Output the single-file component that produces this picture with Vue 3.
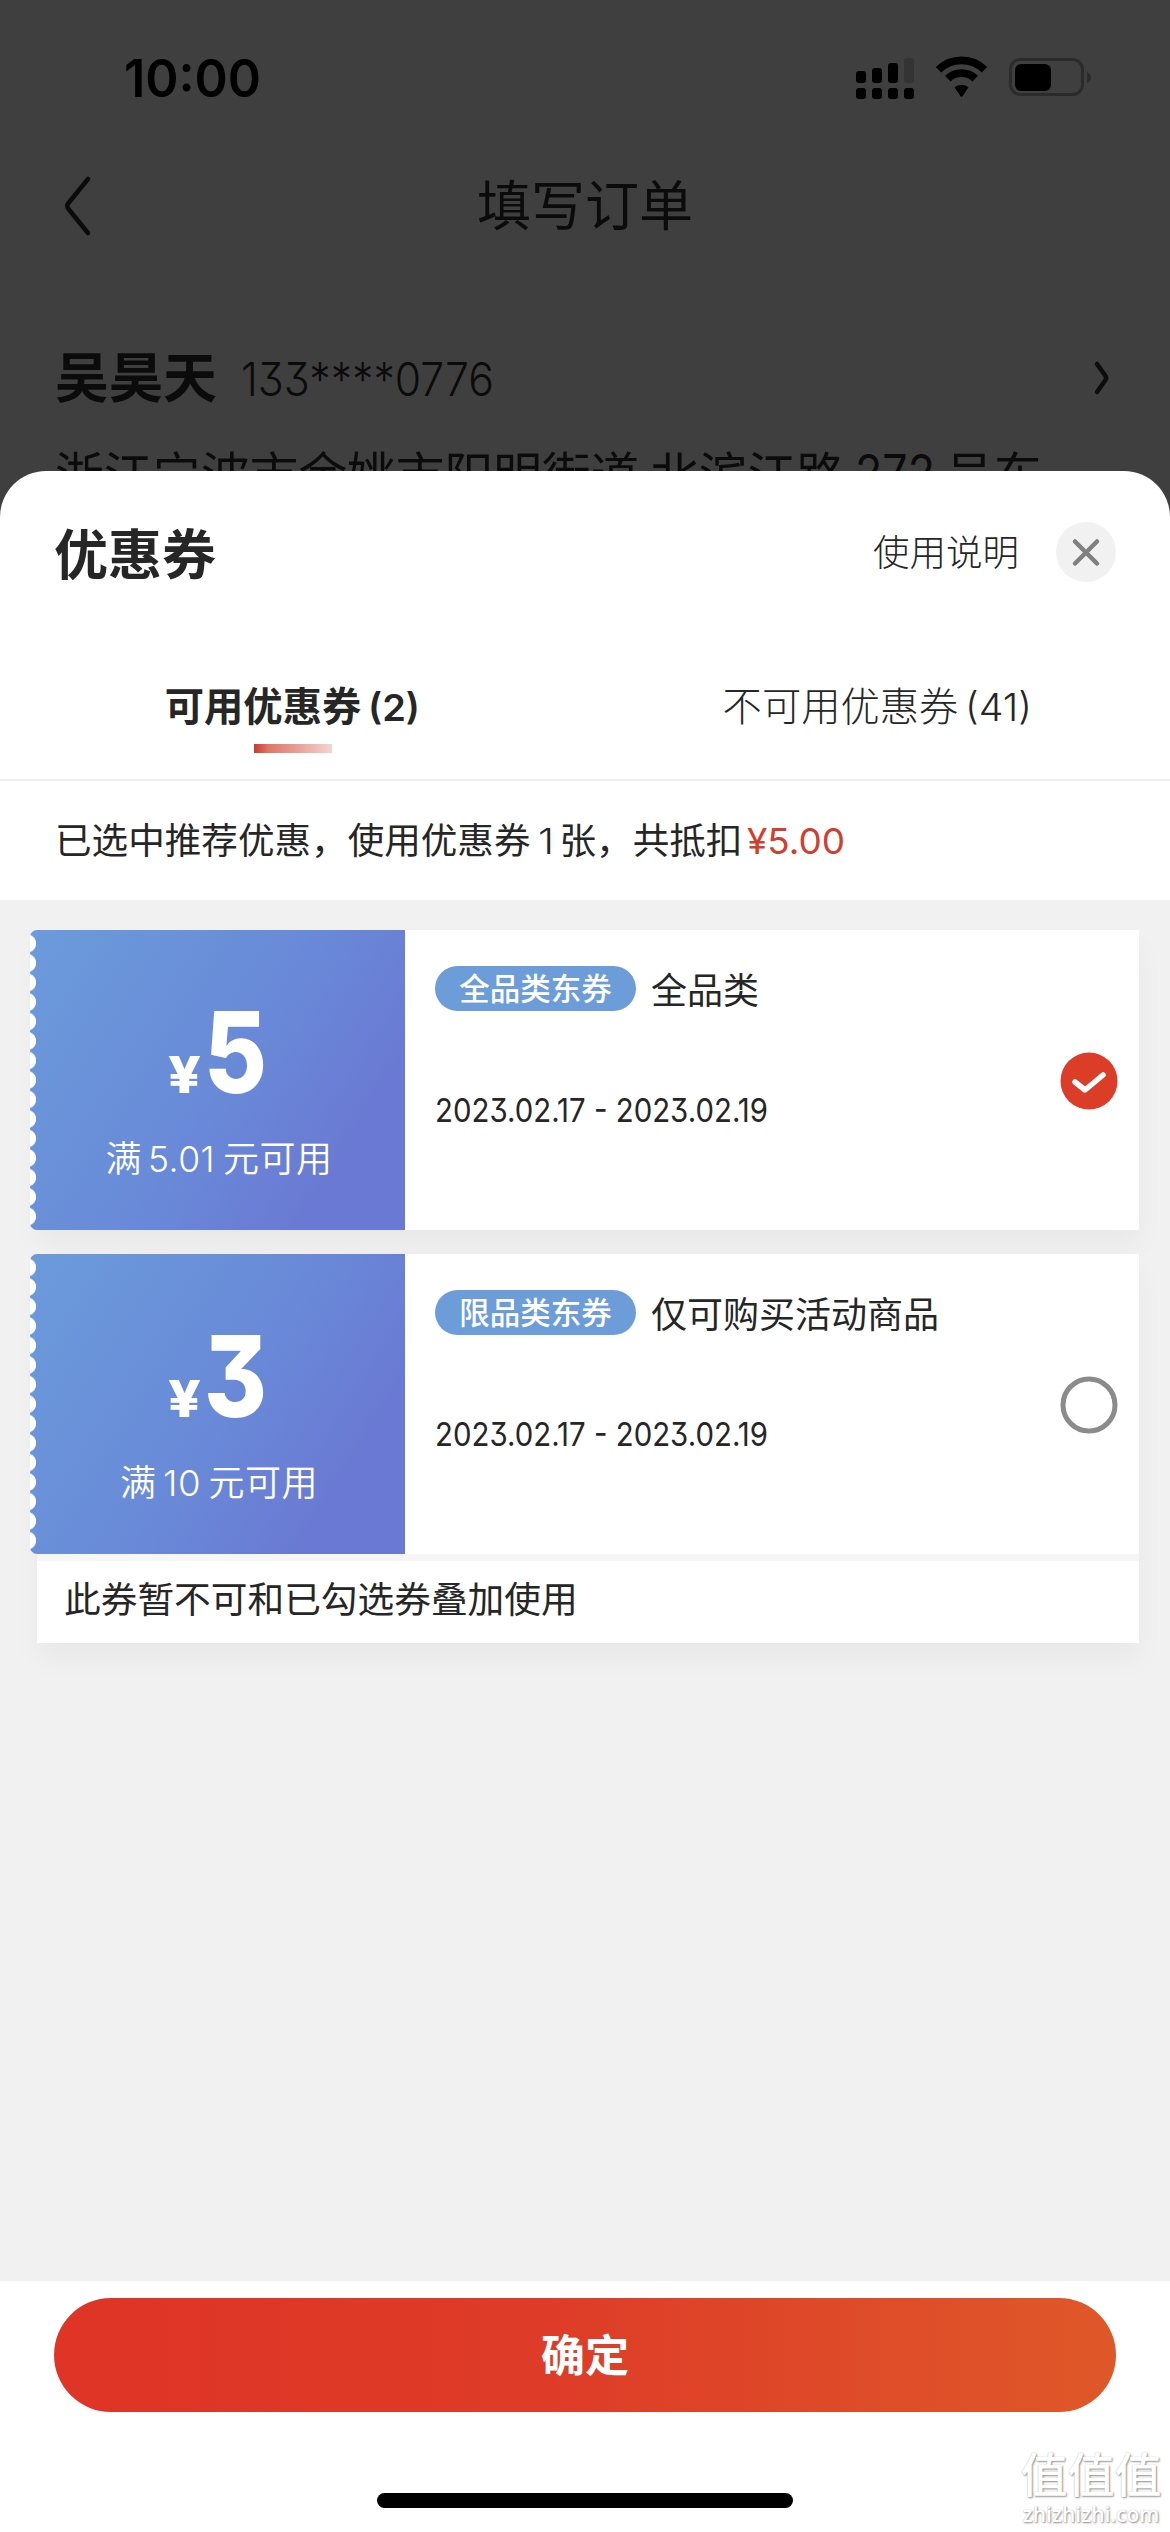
<script setup>
import { h } from 'vue'

// Latin digits set to a fixed width, sitting on the surrounding text baseline
const Num = ({ text, size, width, weight = 400 }) =>
  h('svg', { class: 'num', width, height: size * 0.727 }, [
    h('text', {
      x: 0,
      y: size * 0.727,
      textLength: width,
      lengthAdjust: 'spacingAndGlyphs',
      'font-size': size,
      'font-weight': weight,
      fill: 'currentColor',
      style: 'white-space: pre',
    }, text),
  ])
Num.props = ['text', 'size', 'width', 'weight']

const coupons = [
  { id: 1, amount: '5', limit: '5.01', limitWidth: 67, tag: '全品类东券', name: '全品类', selected: true },
  { id: 2, amount: '3', limit: '10', limitWidth: 38, tag: '限品类东券', name: '仅可购买活动商品', selected: false, note: '此券暂不可和已勾选券叠加使用' },
]
</script>

<template>
  <div class="screen">
    <header class="backdrop">
      <div class="status">
        <Num text="10:00" :size="52" :width="137" :weight="600" />
        <svg class="status-icons" width="240" height="44" viewBox="0 0 240 44">
          <g>
            <rect x="0" y="15" width="10" height="12" rx="3" />
            <rect x="16" y="12" width="10" height="15" rx="3" />
            <rect x="32" y="7" width="10" height="20" rx="3" />
            <rect x="48" y="2" width="10" height="25" rx="3" fill="#343434" />
            <rect x="0" y="32" width="10" height="11" rx="3" />
            <rect x="16" y="32" width="10" height="11" rx="3" />
            <rect x="32" y="32" width="10" height="11" rx="3" />
            <rect x="48" y="32" width="10" height="11" rx="3" />
          </g>
          <g fill="none" stroke="#000" stroke-width="7.8">
            <path d="M82.500 13.800 A33 33 0 0 1 128.500 13.800" />
            <path d="M91.800 22.600 A20 20 0 0 1 119.200 22.600" />
          </g>
          <path d="M98.500 31.300 A10.500 10.500 0 0 1 112.500 31.300 L106.500 40.300 Q105.500 41.300 104.500 40.300 Z" />
          <rect x="154.500" y="3.500" width="72" height="35" rx="10" fill="none" stroke="#2b2b2b" stroke-width="3" />
          <rect x="159" y="8" width="36" height="27" rx="6" />
          <path d="M231 16 Q235 17.500 235 21.500 Q235 25.500 231 27 Z" fill="#2b2b2b" />
        </svg>
      </div>
      <nav class="nav">
        <svg class="back" width="32" height="62" viewBox="0 0 32 62">
          <path d="M26 4 L6.500 28 Q4 31 6.500 34 L26 58" fill="none" stroke="#0b0b0b" stroke-width="4.500" stroke-linecap="round" />
        </svg>
        <h1>填写订单</h1>
      </nav>
      <section class="address">
        <div class="person">
          <strong>吴昊天</strong>
          <Num text="133****0776" :size="47" :width="253" :weight="300" />
          <svg class="go" width="18" height="36" viewBox="0 0 18 36">
            <path d="M4 4 L12.500 16 Q13.800 18 12.500 20 L4 32" fill="none" stroke="#0d0d0d" stroke-width="4.500" stroke-linecap="round" />
          </svg>
        </div>
        <p>浙江宁波市余姚市阳明街道&nbsp;北滨江路<Num text="272" :size="50" :width="80" />号东</p>
      </section>
    </header>

    <main class="sheet">
      <div class="sheet-head">
        <h2>优惠券</h2>
        <span class="help">使用说明</span>
        <svg width="60" height="60" viewBox="0 0 60 60">
          <circle cx="30" cy="30" r="30" fill="#f1f1f1" />
          <path d="M19 19.500 L41 41.500 M41 19.500 L19 41.500" stroke="#808080" stroke-width="4.500" stroke-linecap="round" />
        </svg>
      </div>

      <div class="tabs">
        <div class="tab active">
          <span>可用优惠券<Num class="count" text="(2)" :size="37" :width="52" :weight="600" /></span>
        </div>
        <div class="tab">
          <span>不可用优惠券<Num class="count" text="(41)" :size="38" :width="67" :weight="300" /></span>
        </div>
      </div>

      <p class="summary">已选中推荐优惠，使用优惠券<Num class="one" text="1" :size="36" :width="16" :weight="350" />张，共抵扣<Num class="off" text="¥5.00" :size="36" :width="98" /></p>

      <div class="list">
        <article v-for="c in coupons" :key="c.id" class="coupon">
          <div class="ticket">
            <div class="face">
              <div class="amount">
                <Num text="¥" :size="51" :width="33" :weight="800" />
                <Num :text="c.amount" :size="113" :width="63" :weight="850" />
              </div>
              <div class="limit">满<Num class="limit-num" :text="c.limit" :size="36" :width="c.limitWidth" :weight="300" />元可用</div>
            </div>
            <div class="info">
              <div class="title"><span class="tag">{{ c.tag }}</span><span>{{ c.name }}</span></div>
              <Num class="date" text="2023.02.17 - 2023.02.19" :size="32.500" :width="333" />
            </div>
            <svg class="check" width="58" height="58" viewBox="0 0 58 58">
              <template v-if="c.selected">
                <circle cx="29" cy="29" r="28.500" fill="#dc3d29" />
                <path d="M15 30 L25 38 L43 23" fill="none" stroke="#fff" stroke-width="5.500" stroke-linecap="round" stroke-linejoin="round" />
              </template>
              <circle v-else cx="29" cy="29" r="26" fill="#fff" stroke="#8b8b8b" stroke-width="5" />
            </svg>
          </div>
          <p v-if="c.note" class="note">{{ c.note }}</p>
        </article>
      </div>

      <footer class="bottom">
        <button class="confirm">确定</button>
        <div class="home"></div>
      </footer>
    </main>

    <div class="mark">
      <b>值值值</b>
      <span>zhizhizhi.com</span>
    </div>
  </div>
</template>

<style>
body {
  background: #3f3f3f;
}
</style>

<style scoped>
.screen {
  position: relative;
  width: 1170px;
  height: 2532px;
  overflow: hidden;
  display: flex;
  flex-direction: column;
  background: #3f3f3f;
  color: #262626;
  font-family: "Noto Sans CJK SC", sans-serif;
}
h1, h2, p {
  margin: 0;
  font-weight: 400;
}
.num {
  overflow: visible;
  font-family: Inter, "Liberation Sans", sans-serif;
  font-feature-settings: "cv09" 1;
  flex: none;
}
.backdrop {
  height: 471px;
  flex: none;
  overflow: hidden;
  color: #0b0b0b;
}
.status {
  height: 156px;
  box-sizing: border-box;
  padding: 0 74px 0 124px;
  display: flex;
  align-items: center;
  justify-content: space-between;
  color: #000;
}
.nav {
  height: 100px;
  display: flex;
  align-items: center;
  padding: 0 62px;
}
.nav h1 {
  flex: 1;
  margin-right: 32px;
  text-align: center;
  font-size: 54px;
  line-height: 100px;
  padding-bottom: 6px;
}
.address {
  padding: 82px 57px 0 55px;
}
.person {
  display: flex;
  align-items: center;
  height: 80px;
}
.person strong {
  font-size: 54px;
  line-height: 80px;
  padding-bottom: 6px;
  margin-right: 24px;
}
.person .num {
  margin-top: 2px;
}
.go {
  margin-left: auto;
  margin-right: 2px;
}
.address p {
  margin-top: 24px;
  font-size: 48.700px;
  line-height: 60px;
  white-space: nowrap;
}
.address p .num {
  margin: 0 10px 2px;
}
.sheet {
  flex: 1;
  min-height: 0;
  display: flex;
  flex-direction: column;
  background: #fff;
  border-radius: 46px 46px 0 0;
}
.sheet-head {
  height: 162px;
  flex: none;
  display: flex;
  align-items: center;
  padding: 0 54px 0 54px;
}
.sheet-head h2 {
  flex: 1;
  font-size: 54px;
  font-weight: 700;
  line-height: 80px;
}
.help {
  font-size: 36.500px;
  font-weight: 300;
  line-height: 54px;
  margin-right: 37px;
  padding-bottom: 3px;
}
.tabs {
  height: 146px;
  flex: none;
  display: flex;
  border-bottom: 2px solid #eee;
}
.tab {
  flex: 1;
  display: flex;
  flex-direction: column;
  align-items: center;
  font-size: 39.300px;
  font-weight: 300;
  line-height: 58px;
  padding-top: 42px;
}
.tab.active {
  font-weight: 700;
}
.count {
  margin-left: 7px;
}
.tab.active::after {
  content: "";
  width: 78px;
  height: 9px;
  margin-top: 11px;
  background: linear-gradient(90deg, #cb392c, #df7466 18%, #f3d5d0);
}
.summary {
  height: 119px;
  flex: none;
  padding: 0 55px;
  font-size: 36.600px;
  line-height: 116px;
  white-space: nowrap;
}
.one {
  margin: 0 6px 0 7px;
}
.off {
  margin-left: 5px;
  color: #d13f2f;
}
.list {
  flex: 1;
  display: flex;
  flex-direction: column;
  gap: 24px;
  padding: 30px 31px 0 30px;
  background: #f1f1f1;
}
.ticket {
  position: relative;
  z-index: 1;
  height: 300px;
  display: flex;
}
.coupon {
  position: relative;
}
.coupon::before {
  content: "";
  position: absolute;
  inset: 0 0 0 8px;
  box-shadow: 0 16px 28px rgba(0, 0, 0, 0.04);
}
.face {
  width: 375px;
  flex: none;
  box-sizing: border-box;
  border-radius: 7px 0 0 7px;
  background:
    radial-gradient(circle at -3px 50%, #fff 8.700px, transparent 9.500px) 0 3.750px / 10px 19.500px repeat-y,
    linear-gradient(122deg, #6b9bdb, #698ad8 50%, #6a79d3 82%);
  color: #fff;
  display: flex;
  flex-direction: column;
  align-items: center;
  padding-top: 81px;
}
.amount {
  display: flex;
  align-items: flex-end;
  height: 82px;
  gap: 3px;
}
.limit {
  margin-top: 36px;
  padding-left: 3px;
  font-size: 36px;
  font-weight: 350;
  line-height: 54px;
  letter-spacing: 0.500px;
}
.limit-num {
  margin: 0 8px 0 6px;
}
.info {
  flex: 1;
  padding: 36px 0 0 30px;
  background: #fff;
}
.title {
  display: flex;
  align-items: center;
  gap: 15px;
  height: 45px;
  font-size: 36px;
  line-height: 43px;
  white-space: nowrap;
}
.tag {
  width: 201px;
  height: 45px;
  border-radius: 23px;
  background: #6c9dd9;
  color: #fff;
  font-size: 30.500px;
  font-weight: 500;
  line-height: 43px;
  text-align: center;
}
.date {
  display: block;
  margin-top: 87px;
}
.check {
  position: absolute;
  right: 21px;
  top: 122px;
}
.note {
  position: relative;
  margin-left: 7px;
  height: 89px;
  box-sizing: border-box;
  border-top: 7px solid #f6f6f6;
  padding-left: 27px;
  background: #fff;
  font-size: 36.700px;
  line-height: 73px;
}
.bottom {
  height: 251px;
  box-sizing: border-box;
  flex: none;
  display: flex;
  flex-direction: column;
  align-items: center;
  justify-content: space-between;
  padding: 17px 54px 24px;
}
.confirm {
  width: 100%;
  height: 114px;
  border: 0;
  border-radius: 57px;
  padding: 0 0 4px;
  background: linear-gradient(90deg, #df3426, #de3b28 45%, #df5829);
  color: #fff;
  font: 700 44px "Noto Sans CJK SC", sans-serif;
}
.home {
  width: 416px;
  height: 15px;
  border-radius: 8px;
  background: #000;
}
.mark {
  position: absolute;
  right: 8px;
  bottom: 6px;
  width: 142px;
  display: flex;
  flex-direction: column;
  align-items: center;
  color: #fff;
  text-shadow: 1px 1px 2px #8e8e8e, 0 0 1px #bbb;
}
.mark b {
  font-size: 47px;
  font-weight: 500;
  line-height: 48px;
  height: 54px;
}
.mark span {
  font: 600 21px/24px "Open Sans", sans-serif;
}
</style>
